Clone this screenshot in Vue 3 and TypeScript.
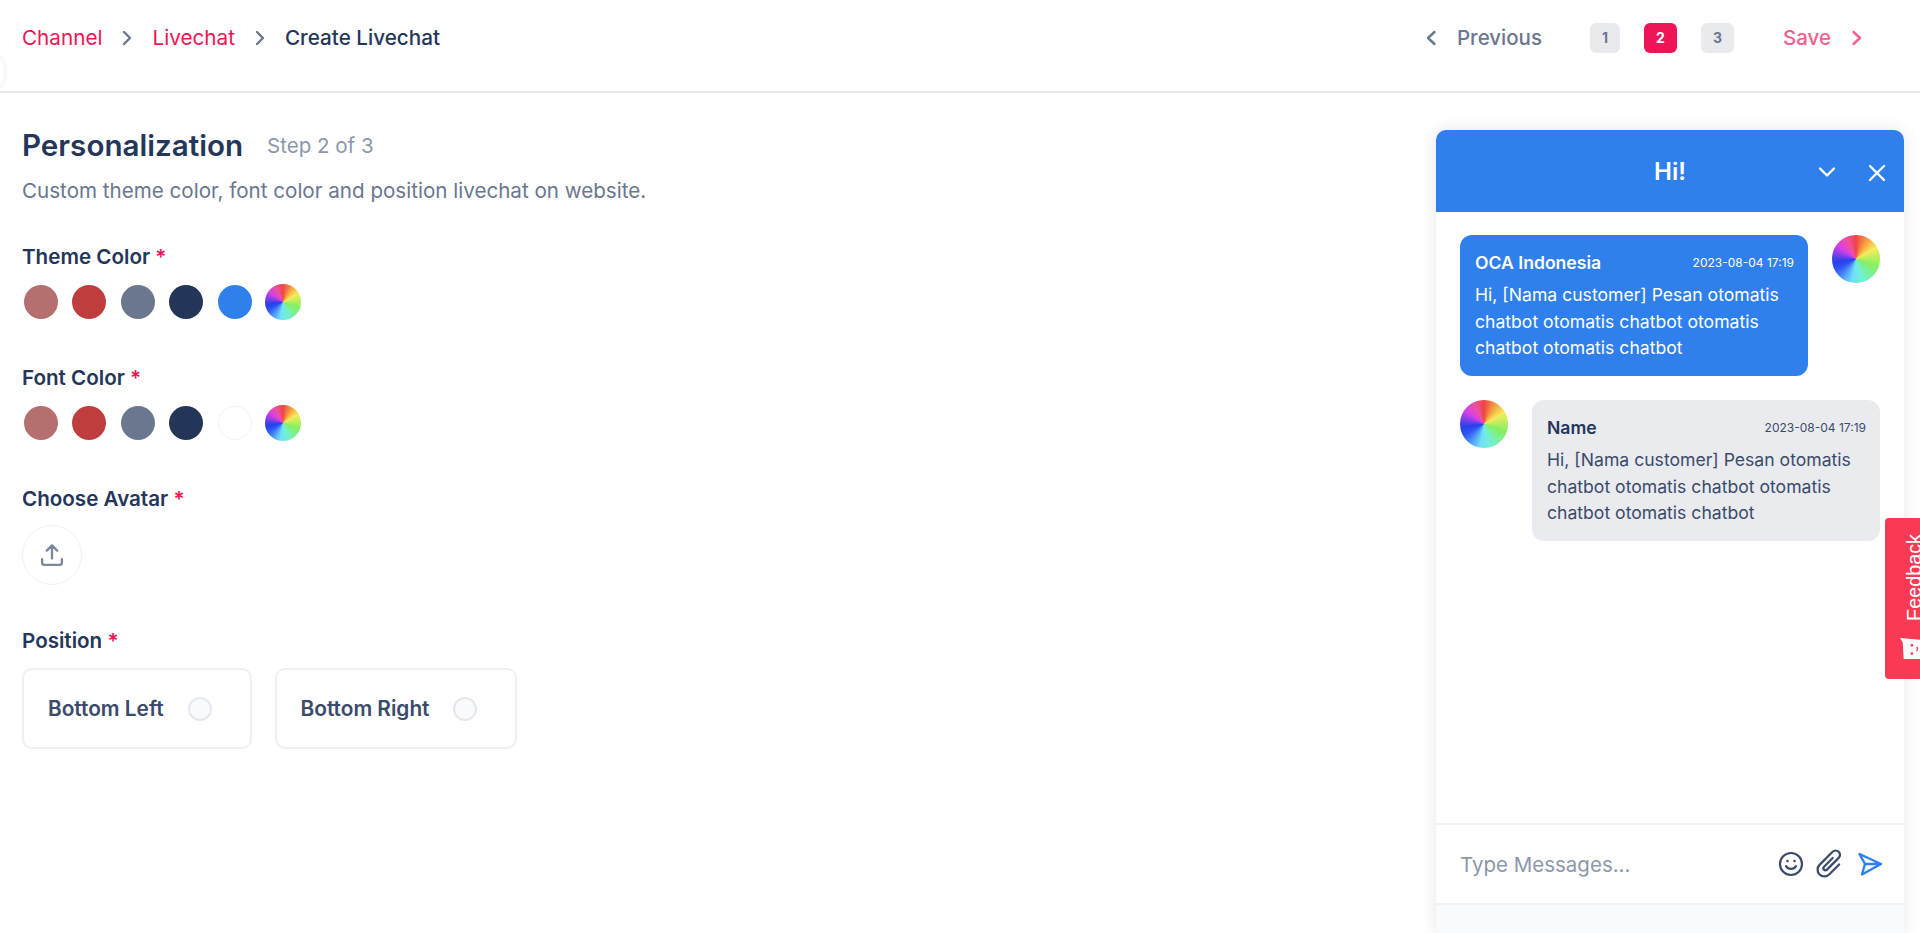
<template>
  <div class="page">
    <header class="topbar">
      <nav class="crumbs">
        <a class="crumb">Channel</a>
        <svg class="crumb-sep" viewBox="0 0 12 18"><path d="M3 3l6 6-6 6" /></svg>
        <a class="crumb">Livechat</a>
        <svg class="crumb-sep" viewBox="0 0 12 18"><path d="M3 3l6 6-6 6" /></svg>
        <span class="crumb-current">Create Livechat</span>
      </nav>
      <div class="stepper">
        <button type="button" class="nav-btn prev">
          <svg viewBox="0 0 12 18"><path d="M9.5 3l-6.5 6 6.5 6" /></svg>
          Previous
        </button>
        <div class="steps">
          <span
            v-for="step in steps"
            :key="step"
            class="step"
            :class="{ active: step === 2 }"
          >{{ step }}</span>
        </div>
        <button type="button" class="nav-btn save">
          Save
          <svg viewBox="0 0 12 18"><path d="M2.5 3l6.5 6-6.5 6" /></svg>
        </button>
      </div>
    </header>

    <main class="content">
      <section class="form">
        <div class="title-row">
          <h1>Personalization</h1>
          <span class="step-of">Step 2 of 3</span>
        </div>
        <p class="desc">Custom theme color, font color and position livechat on website.</p>

        <div class="field theme">
          <label>Theme Color <em>*</em></label>
          <div class="swatches">
            <span
              v-for="c in themeColors"
              :key="c"
              class="swatch"
              :style="{ background: c }"
            ></span>
            <span class="wheel swatch-wheel"></span>
          </div>
        </div>

        <div class="field font">
          <label>Font Color <em>*</em></label>
          <div class="swatches">
            <span
              v-for="c in fontColors"
              :key="c"
              class="swatch"
              :class="{ blank: c === '#ffffff' }"
              :style="{ background: c }"
            ></span>
            <span class="wheel swatch-wheel"></span>
          </div>
        </div>

        <div class="field avatar">
          <label>Choose Avatar <em>*</em></label>
          <button type="button" class="upload">
            <svg viewBox="0 0 24 24">
              <path d="M12 15V4M7.5 8.2L12 3.8l4.5 4.4M3.5 15.5v3a2 2 0 0 0 2 2h13a2 2 0 0 0 2-2v-3" />
            </svg>
          </button>
        </div>

        <div class="field position">
          <label>Position <em>*</em></label>
          <div class="cards">
            <div v-for="p in positions" :key="p" class="card">
              <span>{{ p }}</span>
              <i class="radio"></i>
            </div>
          </div>
        </div>
      </section>

      <aside class="chat">
        <div class="chat-head">
          <span class="chat-title">Hi!</span>
          <svg class="head-down" viewBox="0 0 18 12"><path d="M2 2.5l7 7 7-7" /></svg>
          <svg class="head-close" viewBox="0 0 18 18"><path d="M2 2l14 14M16 2L2 16" /></svg>
        </div>
        <div class="chat-body">
          <div class="msg">
            <div class="bubble blue">
              <div class="bubble-top">
                <strong>OCA Indonesia</strong>
                <time>2023-08-04 17:19</time>
              </div>
              <p>{{ messageText }}</p>
            </div>
            <span class="wheel msg-avatar"></span>
          </div>
          <div class="msg">
            <span class="wheel msg-avatar"></span>
            <div class="bubble grey">
              <div class="bubble-top">
                <strong>Name</strong>
                <time>2023-08-04 17:19</time>
              </div>
              <p>{{ messageText }}</p>
            </div>
          </div>
        </div>
        <div class="composer">
          <span class="placeholder">Type Messages...</span>
          <svg class="tool" viewBox="0 0 26 26">
            <circle cx="13" cy="13" r="11" />
            <path d="M8 15.2c1.2 1.8 3 2.7 5 2.7s3.8-.9 5-2.7" />
            <circle class="dot" cx="9.5" cy="10" r="1.3" />
            <circle class="dot" cx="16.5" cy="10" r="1.3" />
          </svg>
          <svg class="tool clip" viewBox="0 0 26 26">
            <path
              transform="rotate(45 13 13)"
              d="M18.5 8v11.5a5.500 5.500 0 0 1-11 0V4.500a3.500 3.500 0 0 1 7 0v13.500a1.700 1.700 0 0 1-3.400 0V8"
            />
          </svg>
          <svg class="tool send" viewBox="0 0 26 26">
            <path d="M2.500 3L24 13 5 23.500 8 13 2.500 3zM8 13h16" />
          </svg>
        </div>
        <div class="chat-foot"></div>
      </aside>
    </main>

    <div class="edge-tab"></div>

    <div class="feedback">
      <span class="feedback-text">Feedback</span>
      <svg class="feedback-icon" viewBox="0 0 24 26">
        <path class="fb-box" d="M0 1l24 2v21l-20 0-1-18z" />
        <circle class="fb-eye" cx="13" cy="9" r="1.5" />
        <circle class="fb-eye" cx="13" cy="18" r="1.5" />
        <path class="fb-mouth" d="M18 11c1.5 1 1.5 3 0 4" />
      </svg>
    </div>
  </div>
</template>

<script setup lang="ts">
const steps = [1, 2, 3];
const themeColors = ["#b56f6f", "#bf3d3d", "#6b778f", "#243657", "#2f80ed"];
const fontColors = ["#b56f6f", "#bf3d3d", "#6b778f", "#243657", "#ffffff"];
const positions = ["Bottom Left", "Bottom Right"];
const messageText =
  "Hi, [Nama customer] Pesan otomatis chatbot otomatis chatbot otomatis chatbot otomatis chatbot";
</script>

<style>
html,
body {
  margin: 0;
  background: #fff;
  overflow: hidden;
}
</style>

<style scoped>
.page {
  position: relative;
  width: 1920px;
  height: 933px;
  overflow: hidden;
  font-family: Inter, "Liberation Sans", sans-serif;
  color: #24365a;
}

.topbar {
  height: 75px;
  border-bottom: 2px solid #e5e7eb;
  display: flex;
  align-items: center;
  justify-content: space-between;
  padding: 0 57px 16px 22px;
}

.crumbs {
  display: flex;
  align-items: center;
  font-size: 20.7px;
}
.crumb {
  color: #ee1556;
}
.crumb-current {
  color: #24365a;
  font-weight: 500;
}
.crumb-sep {
  width: 12px;
  height: 18px;
  margin: 0 19px;
}
.crumb-sep path,
.nav-btn path {
  fill: none;
  stroke: #6b7690;
  stroke-width: 2.4;
  stroke-linecap: round;
  stroke-linejoin: round;
}

.stepper {
  display: flex;
  align-items: center;
}
.nav-btn {
  display: flex;
  align-items: center;
  gap: 20px;
  border: 0;
  padding: 0;
  background: none;
  font: inherit;
  font-size: 20.5px;
  font-weight: 500;
}
.nav-btn svg {
  width: 12px;
  height: 18px;
}
.prev {
  color: #6b7690;
}
.save {
  color: #f5608c;
}
.save path {
  stroke: #f5608c;
}
.steps {
  display: flex;
  gap: 24px;
  margin: 0 49px 0 48px;
}
.step {
  width: 33px;
  height: 30px;
  border-radius: 6px;
  background: #e8eaee;
  color: #6b7690;
  font-size: 14px;
  font-weight: 700;
  display: flex;
  align-items: center;
  justify-content: center;
}
.step:first-child {
  width: 30px;
}
.step.active {
  background: #ee1556;
  color: #fff;
}

.content {
  display: flex;
  justify-content: space-between;
  align-items: flex-start;
}

.form {
  padding: 32px 0 0 22px;
}
.title-row {
  display: flex;
  align-items: center;
  gap: 24px;
  height: 40px;
}
h1 {
  margin: 0;
  font-size: 29.6px;
  font-weight: 600;
}
.step-of {
  font-size: 20.5px;
  color: #8d97ab;
}
.desc {
  margin: 12px 0 0;
  font-size: 20.6px;
  line-height: 28px;
  color: #6b7690;
}

.field label {
  display: block;
  font-size: 20.6px;
  line-height: 26px;
  font-weight: 600;
}
.field em {
  font-style: normal;
  color: #ee1556;
}
.theme {
  margin-top: 39px;
}
.font {
  margin-top: 45px;
}
.avatar {
  margin-top: 45px;
}
.position {
  margin-top: 43px;
}

.swatches {
  display: flex;
  align-items: center;
  gap: 14.5px;
  margin-top: 14px;
  padding-left: 1.5px;
}
.swatch {
  width: 34px;
  height: 34px;
  border-radius: 50%;
  flex: none;
}
.swatch.blank {
  box-sizing: border-box;
  border: 1px solid #f1f2f4;
}
.wheel {
  display: block;
  border-radius: 50%;
  background: conic-gradient(
    #ef4444,
    #f59e3f 30deg,
    #f5ec5a 60deg,
    #84f060 110deg,
    #70f0d8 165deg,
    #6fe0f8 190deg,
    #2f55f5 240deg,
    #2540e8 262deg,
    #d53fe8 305deg,
    #f050a0 335deg,
    #ef4444
  );
}
.swatch-wheel {
  width: 36px;
  height: 36px;
  margin-left: -1px;
  flex: none;
}

.upload {
  display: flex;
  align-items: center;
  justify-content: center;
  width: 60px;
  height: 60px;
  margin-top: 13px;
  border: 1px solid #eff0f3;
  border-radius: 50%;
  background: #fff;
  padding: 0;
}
.upload svg {
  width: 28px;
  height: 28px;
  fill: none;
  stroke: #7d879c;
  stroke-width: 2;
  stroke-linecap: round;
  stroke-linejoin: round;
}

.cards {
  display: flex;
  gap: 23px;
  margin-top: 14px;
}
.card {
  display: flex;
  align-items: center;
  gap: 24px;
  height: 81px;
  box-sizing: border-box;
  padding: 0 38px 0 24px;
  border: 2px solid #eef0f4;
  border-radius: 10px;
  font-size: 20.8px;
  font-weight: 600;
  color: #3b4a6b;
}
.radio {
  width: 24px;
  height: 24px;
  box-sizing: border-box;
  border: 2px solid #e4e7ec;
  border-radius: 50%;
  background: #f9fafb;
}

.chat {
  width: 468px;
  height: 803px;
  margin: 37px 16px 0 0;
  display: flex;
  flex-direction: column;
  border-radius: 10px 10px 0 0;
  background: #fff;
  box-shadow: 0 0 16px rgba(31, 49, 87, 0.12);
}
.chat-head {
  position: relative;
  height: 82px;
  flex: none;
  display: flex;
  align-items: center;
  justify-content: center;
  background: #2f80ed;
  border-radius: 10px 10px 0 0;
}
.chat-title {
  color: #fff;
  font-size: 24px;
  font-weight: 600;
}
.chat-head svg {
  position: absolute;
  fill: none;
  stroke: #fff;
  stroke-width: 2.4;
  stroke-linecap: round;
  stroke-linejoin: round;
}
.head-down {
  width: 18px;
  height: 12px;
  right: 68px;
  top: 36px;
}
.head-close {
  width: 18px;
  height: 18px;
  right: 18px;
  top: 34px;
}

.chat-body {
  flex: 1;
  padding: 23px 24px 0;
  display: flex;
  flex-direction: column;
  gap: 24px;
}
.msg {
  display: flex;
  justify-content: space-between;
  align-items: flex-start;
}
.msg-avatar {
  width: 48px;
  height: 48px;
  flex: none;
}
.bubble {
  width: 348px;
  height: 141px;
  box-sizing: border-box;
  padding: 15px 14px 0 15px;
  border-radius: 12px;
}
.bubble-top {
  display: flex;
  align-items: center;
  justify-content: space-between;
  height: 24px;
}
.bubble strong {
  font-size: 17.6px;
  font-weight: 600;
}
.bubble time {
  font-size: 12px;
}
.bubble p {
  margin: 8px 0 0;
  font-size: 17.6px;
  line-height: 26.5px;
}
.blue {
  background: #2f80ed;
  color: #fff;
}
.grey {
  background: #e9ebef;
  color: #3b4a6b;
}
.grey strong {
  color: #24365a;
}

.composer {
  flex: none;
  height: 78px;
  display: flex;
  align-items: center;
  padding: 0 21px 0 24px;
  border-top: 2px solid #f1f2f4;
  border-bottom: 2px solid #f1f2f4;
}
.placeholder {
  flex: 1;
  font-size: 20.5px;
  color: #8d97ab;
}
.tool {
  width: 26px;
  height: 26px;
  margin-left: 13px;
  fill: none;
  stroke: #3b4a6b;
  stroke-width: 2.2;
  stroke-linecap: round;
  stroke-linejoin: round;
}
.tool .dot {
  fill: #3b4a6b;
  stroke: none;
}
.clip {
  width: 32px;
  height: 32px;
  margin: 0 -3px 0 10px;
  stroke-width: 1.8;
}
.send {
  stroke: #2f80ed;
  stroke-width: 2.4;
  margin-left: 14px;
}
.chat-foot {
  flex: none;
  height: 28px;
  background: #f9fafb;
}

.edge-tab {
  position: absolute;
  left: -22px;
  top: 54px;
  width: 26px;
  height: 36px;
  border-radius: 50%;
  background: #fff;
  box-shadow: 0 0 6px rgba(31, 49, 87, 0.1);
}

.feedback {
  position: absolute;
  right: -10px;
  top: 518px;
  width: 45px;
  height: 161px;
  box-sizing: border-box;
  display: flex;
  flex-direction: column;
  align-items: center;
  padding-top: 16px;
  gap: 16px;
  border-radius: 4px 0 0 4px;
  background: #f93a55;
}
.feedback-text {
  writing-mode: vertical-rl;
  transform: rotate(180deg);
  font-family: "Liberation Sans", Arial, sans-serif;
  font-size: 19.8px;
  line-height: 20px;
  color: #fff;
  margin-left: 12px;
}
.feedback-icon {
  width: 22px;
  height: 24px;
  margin-left: 6px;
}
.fb-box {
  fill: #fff;
}
.fb-eye {
  fill: #f93a55;
}
.fb-mouth {
  fill: none;
  stroke: #f93a55;
  stroke-width: 1.5;
}
</style>
